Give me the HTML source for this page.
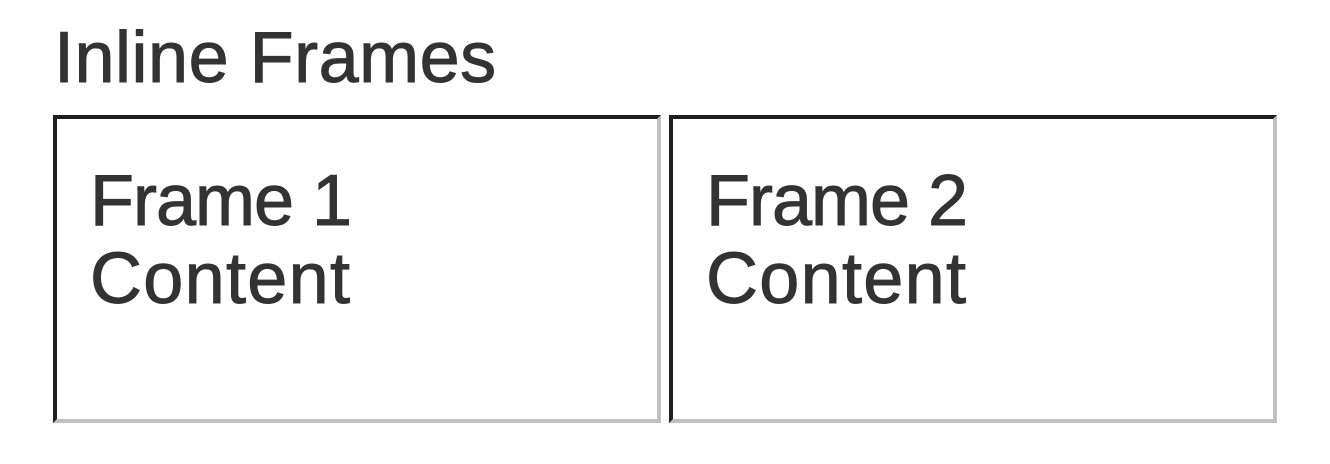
<!DOCTYPE html>
<html><head><style>
body{margin:0;width:1330px;height:464px;background:#fff;font-family:"Liberation Sans",Arial,sans-serif;color:#333;position:relative;overflow:hidden}
h1{position:absolute;left:54px;top:13px;margin:0;font-size:72px;font-weight:normal;line-height:90px;letter-spacing:0.5px;-webkit-text-stroke:1px #333}
.f{position:absolute;top:115px;width:600px;height:300px;border:4px solid;border-color:#1f1f1f #c0c0c0 #c0c0c0 #1f1f1f;box-sizing:content-box}
.f div{position:absolute;left:33px;top:43px;font-size:72px;line-height:78px;letter-spacing:-1px;-webkit-text-stroke:1px #333}
.f span{letter-spacing:1.3px}
</style></head><body>
<h1>Inline Frames</h1>
<div class="f" style="left:53px"><div>Frame 1<br><span>Content</span></div></div>
<div class="f" style="left:669px"><div>Frame 2<br><span>Content</span></div></div>
</body></html>
